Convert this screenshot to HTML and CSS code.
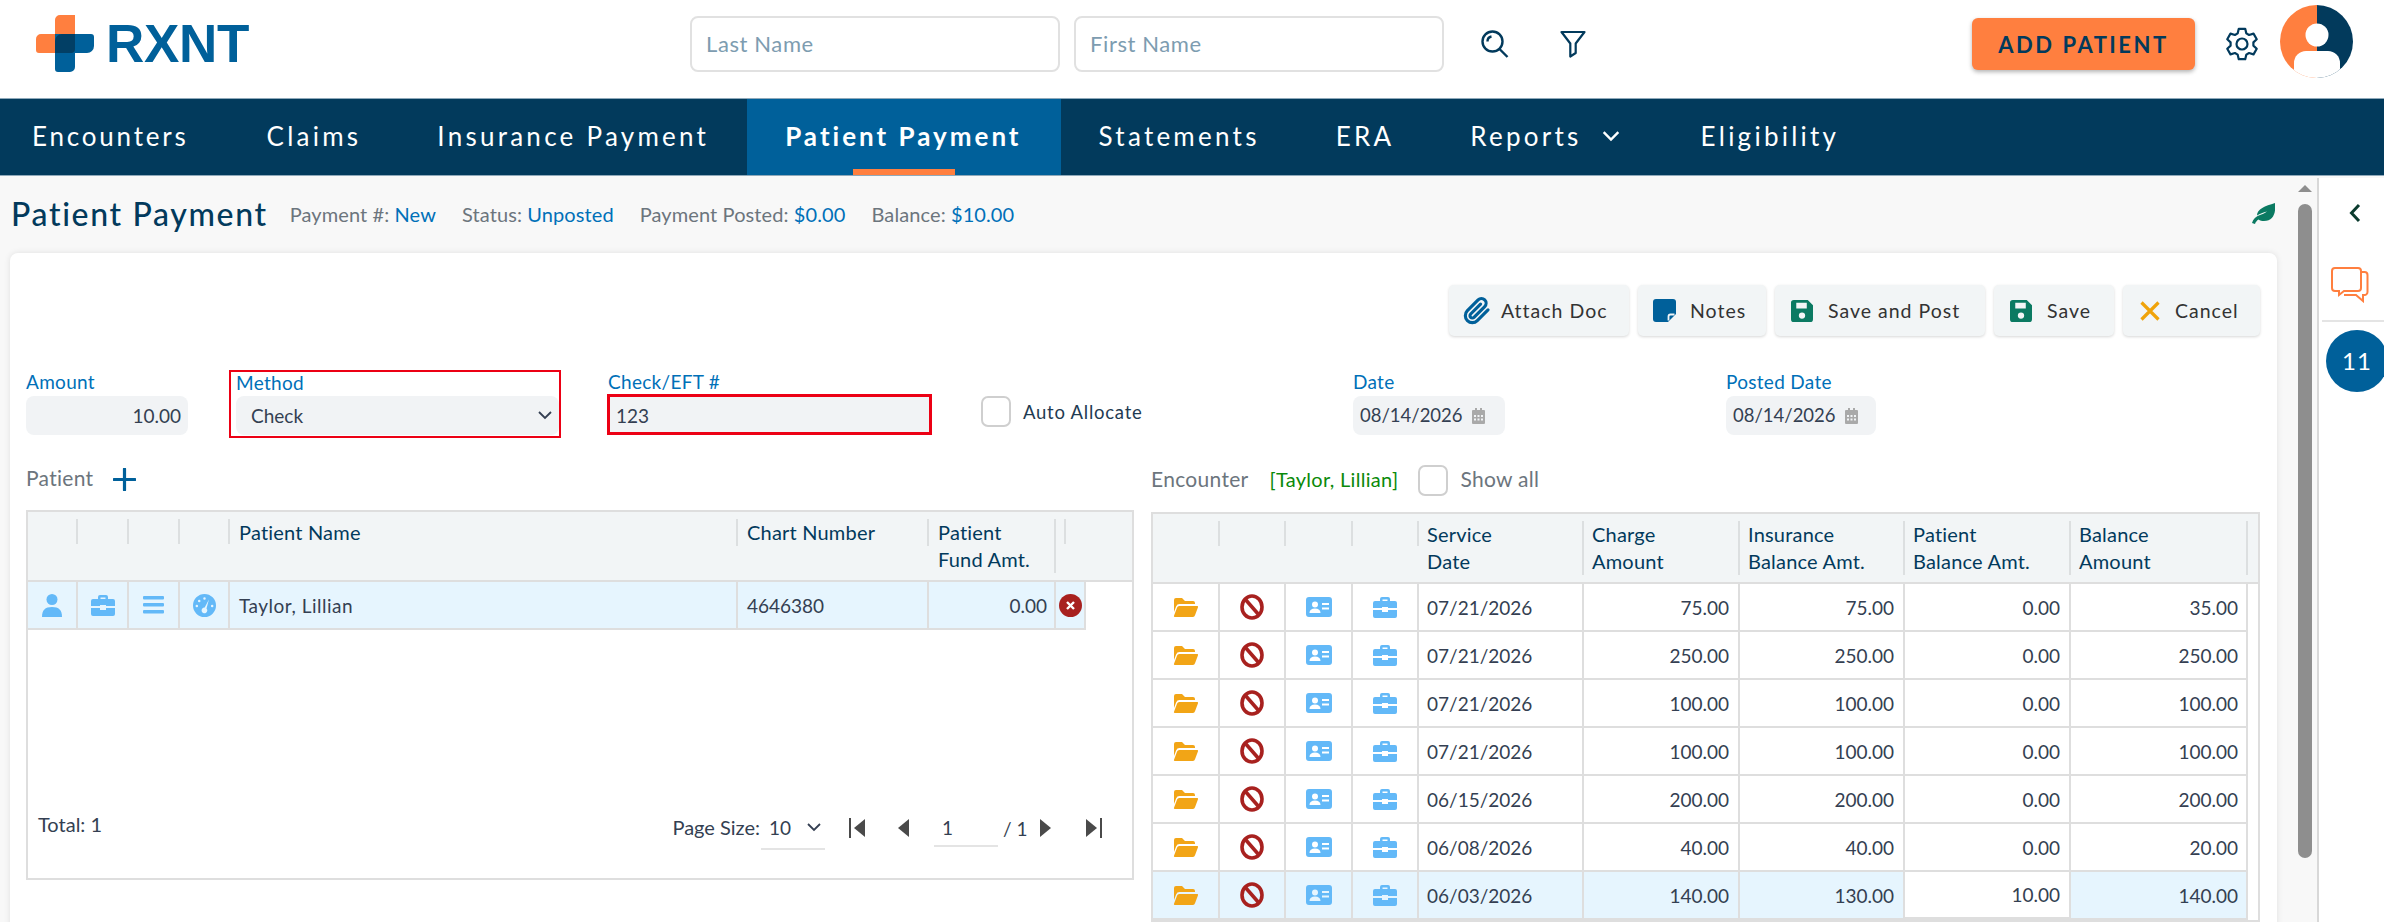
FILE: index.html
```html
<!DOCTYPE html>
<html lang="en">
<head>
<meta charset="utf-8">
<title>Patient Payment</title>
<link rel="stylesheet" href="styles.css">
</head>
<body>
<svg class="defs" aria-hidden="true">
  <symbol id="i-person" viewBox="0 0 20 23"><circle cx="10" cy="5.5" r="5.5"/><path d="M0 23c0-7 3-10 10-10s10 3 10 10z"/></symbol>
  <symbol id="i-case" viewBox="0 0 24 22"><path d="M7 5V3a2 2 0 0 1 2-2h6a2 2 0 0 1 2 2v2h-2.500V3.500h-5V5z"/><path d="M2 5h20a2 2 0 0 1 2 2v5H15v-1H9v1H0V7a2 2 0 0 1 2-2z"/><path d="M0 14h9v2h6v-2h9v6a2 2 0 0 1-2 2H2a2 2 0 0 1-2-2z"/></symbol>
  <symbol id="i-list" viewBox="0 0 21 18"><rect width="21" height="3.600" rx="1"/><rect y="7" width="21" height="3.600" rx="1"/><rect y="14" width="21" height="3.600" rx="1"/></symbol>
  <symbol id="i-gauge" viewBox="0 0 24 24"><path fill-rule="evenodd" d="M12 0a12 12 0 1 1 0 24 12 12 0 0 1 0-24zm4.600 5.800-4.400 8.300a3 3 0 1 0 1.900.9zM12 3.400a1.300 1.300 0 1 0 0 2.600 1.300 1.300 0 0 0 0-2.600zM6.500 6a1.300 1.300 0 1 0 0 2.600 1.300 1.300 0 0 0 0-2.600zM4 11.300a1.300 1.300 0 1 0 0 2.600 1.300 1.300 0 0 0 0-2.600zm16 0a1.300 1.300 0 1 0 0 2.600 1.300 1.300 0 0 0 0-2.600z"/></symbol>
  <symbol id="i-folder" viewBox="0 0 25 20"><path d="M1 3a2 2 0 0 1 2-2h6l3 3h8a2 2 0 0 1 2 2v1H6.500a3.500 3.500 0 0 0-3.300 2.300L1 15z"/><path d="M6.500 9H24a1 1 0 0 1 1 1.300l-3 8a2.500 2.500 0 0 1-2 1.700H2a1 1 0 0 1-1-1.300l3-8a2.500 2.500 0 0 1 2.500-1.700z"/></symbol>
  <symbol id="i-ban" viewBox="0 0 24 26"><ellipse cx="12" cy="13" rx="10" ry="11" fill="none" stroke="currentColor" stroke-width="3.600"/><path d="M5 5l14 16" fill="none" stroke="currentColor" stroke-width="3.600"/></symbol>
  <symbol id="i-id" viewBox="0 0 26 20"><path fill-rule="evenodd" d="M3 0h20a3 3 0 0 1 3 3v14a3 3 0 0 1-3 3H3a3 3 0 0 1-3-3V3a3 3 0 0 1 3-3zm6 4.500a3 3 0 1 0 0 6 3 3 0 0 0 0-6zM3.500 16h11c0-3-2-4.500-5.500-4.500S3.500 13 3.500 16zM16 6v2h7V6zm0 4.500v2h7v-2z"/></symbol>
  <symbol id="i-save" viewBox="0 0 23 23"><path fill-rule="evenodd" d="M3 0h14.500L23 5.500V20a3 3 0 0 1-3 3H3a3 3 0 0 1-3-3V3a3 3 0 0 1 3-3zm2.500 3v6h11V3zm6 10a3.300 3.300 0 1 0 0 6.600 3.300 3.300 0 0 0 0-6.600z"/></symbol>
  <symbol id="i-cal" viewBox="0 0 13 16"><path fill-rule="evenodd" d="M1 2h2V0h2v2h3V0h2v2h2a1 1 0 0 1 1 1v12a1 1 0 0 1-1 1H1a1 1 0 0 1-1-1V3a1 1 0 0 1 1-1zm1 5v2h2V7zm3.500 0v2h2V7zM9 7v2h2V7zm-7 3.500v2h2v-2zm3.500 0v2h2v-2zm3.500 0v2h2v-2z"/></symbol>
  <symbol id="i-chev" viewBox="0 0 14 9"><path d="M1 1l6 6 6-6" fill="none" stroke="currentColor" stroke-width="1.800"/></symbol>
</svg>

<header class="topbar">
  <div class="logo">
    <svg class="logo-mark" viewBox="0 0 58 57" aria-hidden="true">
      <path class="lm-orange" d="M24 0h15v38H3a3 3 0 0 1-3-3V24a5 5 0 0 1 5-5h14V5a5 5 0 0 1 5-5z"/>
      <path class="lm-blue" d="M19 19h36a3 3 0 0 1 3 3v9a7 7 0 0 1-7 7H39v14a5 5 0 0 1-5 5H22a3 3 0 0 1-3-3z"/>
      <path class="lm-dark" d="M26 19h13v15a4 4 0 0 1-4 4H19V26a7 7 0 0 1 7-7z"/>
    </svg>
    <span class="logo-text">RXNT</span>
  </div>
  <div class="search">
    <input class="search-input" type="text" placeholder="Last Name">
    <input class="search-input" type="text" placeholder="First Name">
    <svg class="ic-search" viewBox="0 0 28 28" aria-hidden="true"><circle cx="11.500" cy="11.500" r="10"/><path d="M18.500 19l8 8M6.500 11.500a5 5 0 0 1 4-5"/></svg>
    <svg class="ic-filter" viewBox="0 0 26 28" aria-hidden="true"><path d="M1.500 2h23l-8.800 11.500V23l-5.400 3.500v-13z"/></svg>
  </div>
  <div class="top-actions">
    <button class="add-btn" type="button">ADD PATIENT</button>
    <svg class="ic-gear" viewBox="-17 -17 34 34" aria-hidden="true"><path d="M-4.310-10.660-3.220-15.160 3.220-15.160 4.310-10.660 7.080-9.060 11.520-10.370 14.740-4.790 11.390-1.600 11.390 1.600 14.740 4.790 11.520 10.370 7.080 9.060 4.310 10.660 3.220 15.160-3.220 15.160-4.310 10.660-7.080 9.060-11.520 10.370-14.740 4.790-11.390 1.600-11.390-1.600-14.740-4.790-11.520-10.370-7.080-9.060z"/><circle r="5.500"/></svg>
    <svg class="avatar" viewBox="0 0 73 73" aria-hidden="true">
      <defs><clipPath id="av"><circle cx="36.500" cy="36.500" r="36.500"/></clipPath></defs>
      <g clip-path="url(#av)">
        <rect class="av-o" width="37" height="73"/>
        <rect class="av-n" x="37" width="36" height="73"/>
        <circle class="av-w" cx="37" cy="30" r="11.500"/>
        <rect class="av-w" x="14" y="46" width="46" height="40" rx="12"/>
      </g>
    </svg>
  </div>
</header>

<nav class="nav">
  <a class="nav-item">Encounters</a>
  <a class="nav-item">Claims</a>
  <a class="nav-item">Insurance Payment</a>
  <a class="nav-item active">Patient Payment</a>
  <a class="nav-item">Statements</a>
  <a class="nav-item">ERA</a>
  <a class="nav-item">Reports <svg class="nav-chev" viewBox="0 0 14 9" aria-hidden="true"><path d="M1 1l6 6 6-6"/></svg></a>
  <a class="nav-item">Eligibility</a>
</nav>

<div class="main">
  <main class="content">
    <div class="title-row">
      <h1 class="title">Patient Payment</h1>
      <span class="meta m1">Payment #: <b>New</b></span>
      <span class="meta m2">Status: <b>Unposted</b></span>
      <span class="meta m3">Payment Posted: <b>$0.00</b></span>
      <span class="meta m4">Balance: <b>$10.00</b></span>
      <svg class="leaf" viewBox="0 0 23 21" aria-hidden="true"><path d="M23 0c1 9-1 18-11 18-2 0-4-.5-5.500-1.500C5 17.500 3.500 19 3 21L0 20c1-4 4-6.500 8-8 3-1 5-2 7-3.500-4 1-7 2-10 4C5 6 13 3 23 0z"/></svg>
    </div>

    <section class="card">
      <div class="toolbar">
        <button class="btn b-attach" type="button">
          <svg class="ic-clip" viewBox="0 0 24 24" aria-hidden="true"><path d="M21.440 11.050l-9.190 9.190a6 6 0 0 1-8.490-8.490l9.190-9.190a4 4 0 0 1 5.660 5.660l-9.200 9.190a2 2 0 0 1-2.830-2.830l8.490-8.480"/></svg>Attach Doc</button>
        <button class="btn b-notes" type="button">
          <svg class="ic-note" viewBox="0 0 23 23" aria-hidden="true"><path d="M3 0h17a3 3 0 0 1 3 3v12l-8 8H3a3 3 0 0 1-3-3V3a3 3 0 0 1 3-3z"/><path class="fold" d="M15.500 21.500v-4a2 2 0 0 1 2-2h4"/></svg>Notes</button>
        <button class="btn b-post" type="button"><svg class="ic-save"><use href="#i-save"/></svg>Save and Post</button>
        <button class="btn b-save" type="button"><svg class="ic-save"><use href="#i-save"/></svg>Save</button>
        <button class="btn b-cancel" type="button"><svg class="ic-x" viewBox="0 0 20 20" aria-hidden="true"><path d="M1.500 1.500l17 17M18.500 1.500l-17 17"/></svg>Cancel</button>
      </div>

      <div class="form-row">
        <div class="field f-amount">
          <label class="flabel">Amount</label>
          <div class="fbox right">10.00</div>
        </div>
        <div class="field f-method">
          <label class="flabel tight">Method</label>
          <div class="fbox select">Check<svg class="sel-chev"><use href="#i-chev"/></svg></div>
        </div>
        <div class="field f-check">
          <label class="flabel tight">Check/EFT #</label>
          <div class="fbox error">123</div>
        </div>
        <div class="field f-auto">
          <span class="checkbox"></span><span class="auto-label">Auto Allocate</span>
        </div>
        <div class="field f-date">
          <label class="flabel">Date</label>
          <div class="fbox date">08/14/2026<svg class="ic-cal"><use href="#i-cal"/></svg></div>
        </div>
        <div class="field f-posted">
          <label class="flabel">Posted Date</label>
          <div class="fbox date">08/14/2026<svg class="ic-cal"><use href="#i-cal"/></svg></div>
        </div>
      </div>

      <div class="split">
        <div class="col">
          <div class="sec-head left-head">
            <span class="sec-label">Patient</span>
            <svg class="ic-plus" viewBox="0 0 23 23" aria-hidden="true"><path d="M11.500 1v21M1 11.500h21"/></svg>
          </div>
          <div class="panel patient-panel">
            <table class="grid patient-grid">
              <colgroup><col class="p1"><col class="p2"><col class="p3"><col class="p4"><col class="p5"><col class="p6"><col class="p7"><col class="p8"><col class="p9"></colgroup>
              <thead>
                <tr>
                  <th><div class="hc"></div></th><th><div class="hc"></div></th><th><div class="hc"></div></th><th><div class="hc"></div></th>
                  <th><div class="hc">Patient Name</div></th>
                  <th><div class="hc">Chart Number</div></th>
                  <th><div class="hc">Patient<br>Fund Amt.</div></th>
                  <th><div class="hc w10"></div></th>
                  <th class="blank"></th>
                </tr>
              </thead>
              <tbody>
                <tr class="sel">
                  <td class="ic"><svg class="ri i20"><use href="#i-person"/></svg></td>
                  <td class="ic"><svg class="ri i24"><use href="#i-case"/></svg></td>
                  <td class="ic"><svg class="ri i21"><use href="#i-list"/></svg></td>
                  <td class="ic"><svg class="ri i23"><use href="#i-gauge"/></svg></td>
                  <td class="name">Taylor, Lillian</td>
                  <td>4646380</td>
                  <td class="num fund">0.00</td>
                  <td class="ic"><svg class="remove" viewBox="0 0 23 23" aria-hidden="true"><circle cx="11.500" cy="11.500" r="11.500"/><path d="M8 8l7 7M15 8l-7 7"/></svg></td>
                  <td class="blank"></td>
                </tr>
              </tbody>
            </table>
            <div class="pager">
              <span class="total">Total: 1</span>
              <span class="ps-label">Page Size:</span>
              <span class="ps-box">10<svg class="ps-chev"><use href="#i-chev"/></svg></span>
              <svg class="pg pg-first" viewBox="0 0 18 20" aria-hidden="true"><rect width="2" height="20"/><path d="M16 1v18L5 10z"/></svg>
              <svg class="pg pg-prev" viewBox="0 0 15 20" aria-hidden="true"><path d="M13 1v18L2 10z"/></svg>
              <span class="pg-box">1</span>
              <span class="pg-of">/ 1</span>
              <svg class="pg pg-next" viewBox="0 0 15 20" aria-hidden="true"><path d="M2 1v18l11-9z"/></svg>
              <svg class="pg pg-last" viewBox="0 0 18 20" aria-hidden="true"><rect x="16" width="2" height="20"/><path d="M2 1v18l11-9z"/></svg>
            </div>
          </div>
        </div>

        <div class="col">
          <div class="sec-head right-head">
            <span class="sec-label">Encounter</span>
            <span class="enc-name">[Taylor, Lillian]</span>
            <span class="checkbox enc-check"></span>
            <span class="sec-label">Show all</span>
          </div>
          <div class="panel">
            <table class="grid enc-grid">
              <colgroup><col class="e1"><col class="e2"><col class="e3"><col class="e4"><col class="e5"><col class="e6"><col class="e7"><col class="e8"><col class="e9"><col class="e10"></colgroup>
              <thead>
                <tr>
                  <th><div class="hc"></div></th><th><div class="hc"></div></th><th><div class="hc"></div></th><th><div class="hc"></div></th>
                  <th><div class="hc">Service<br>Date</div></th>
                  <th><div class="hc">Charge<br>Amount</div></th>
                  <th><div class="hc">Insurance<br>Balance Amt.</div></th>
                  <th><div class="hc">Patient<br>Balance Amt.</div></th>
                  <th><div class="hc">Balance<br>Amount</div></th>
                  <th class="blank"></th>
                </tr>
              </thead>
              <tbody>
                <tr><td class="ic"><svg class="ri folder"><use href="#i-folder"/></svg></td><td class="ic"><svg class="ri ban"><use href="#i-ban"/></svg></td><td class="ic"><svg class="ri idc"><use href="#i-id"/></svg></td><td class="ic"><svg class="ri i24"><use href="#i-case"/></svg></td><td>07/21/2026</td><td class="num">75.00</td><td class="num">75.00</td><td class="num">0.00</td><td class="num bal">35.00</td><td class="blank"></td></tr>
                <tr><td class="ic"><svg class="ri folder"><use href="#i-folder"/></svg></td><td class="ic"><svg class="ri ban"><use href="#i-ban"/></svg></td><td class="ic"><svg class="ri idc"><use href="#i-id"/></svg></td><td class="ic"><svg class="ri i24"><use href="#i-case"/></svg></td><td>07/21/2026</td><td class="num">250.00</td><td class="num">250.00</td><td class="num">0.00</td><td class="num bal">250.00</td><td class="blank"></td></tr>
                <tr><td class="ic"><svg class="ri folder"><use href="#i-folder"/></svg></td><td class="ic"><svg class="ri ban"><use href="#i-ban"/></svg></td><td class="ic"><svg class="ri idc"><use href="#i-id"/></svg></td><td class="ic"><svg class="ri i24"><use href="#i-case"/></svg></td><td>07/21/2026</td><td class="num">100.00</td><td class="num">100.00</td><td class="num">0.00</td><td class="num bal">100.00</td><td class="blank"></td></tr>
                <tr><td class="ic"><svg class="ri folder"><use href="#i-folder"/></svg></td><td class="ic"><svg class="ri ban"><use href="#i-ban"/></svg></td><td class="ic"><svg class="ri idc"><use href="#i-id"/></svg></td><td class="ic"><svg class="ri i24"><use href="#i-case"/></svg></td><td>07/21/2026</td><td class="num">100.00</td><td class="num">100.00</td><td class="num">0.00</td><td class="num bal">100.00</td><td class="blank"></td></tr>
                <tr><td class="ic"><svg class="ri folder"><use href="#i-folder"/></svg></td><td class="ic"><svg class="ri ban"><use href="#i-ban"/></svg></td><td class="ic"><svg class="ri idc"><use href="#i-id"/></svg></td><td class="ic"><svg class="ri i24"><use href="#i-case"/></svg></td><td>06/15/2026</td><td class="num">200.00</td><td class="num">200.00</td><td class="num">0.00</td><td class="num bal">200.00</td><td class="blank"></td></tr>
                <tr><td class="ic"><svg class="ri folder"><use href="#i-folder"/></svg></td><td class="ic"><svg class="ri ban"><use href="#i-ban"/></svg></td><td class="ic"><svg class="ri idc"><use href="#i-id"/></svg></td><td class="ic"><svg class="ri i24"><use href="#i-case"/></svg></td><td>06/08/2026</td><td class="num">40.00</td><td class="num">40.00</td><td class="num">0.00</td><td class="num bal">20.00</td><td class="blank"></td></tr>
                <tr class="sel"><td class="ic"><svg class="ri folder"><use href="#i-folder"/></svg></td><td class="ic"><svg class="ri ban"><use href="#i-ban"/></svg></td><td class="ic"><svg class="ri idc"><use href="#i-id"/></svg></td><td class="ic"><svg class="ri i24"><use href="#i-case"/></svg></td><td>06/03/2026</td><td class="num">140.00</td><td class="num">130.00</td><td class="num editing">10.00</td><td class="num bal">140.00</td><td class="blank"></td></tr>
              </tbody>
            </table>
          </div>
        </div>
      </div>
    </section>
  </main>

  <div class="scrollbar"><span class="sb-up"></span><span class="sb-thumb"></span></div>

  <aside class="side">
    <svg class="ic-back" viewBox="0 0 12 20" aria-hidden="true"><path d="M10 2L2.500 10l7.500 8"/></svg>
    <svg class="ic-chat" viewBox="0 0 38 36" aria-hidden="true"><path d="M4 1h23a3 3 0 0 1 3 3v17a3 3 0 0 1-3 3H13l-5 4v-4H4a3 3 0 0 1-3-3V4a3 3 0 0 1 3-3z"/><path d="M30 5h3.500a3 3 0 0 1 3 3v17a3 3 0 0 1-3 3H32v6l-7-6H13"/></svg>
    <div class="side-rule"></div>
    <div class="count">11</div>
  </aside>
</div>
</body>
</html>
```
FILE: styles.css
```css
* { box-sizing: border-box; }
html, body { margin: 0; padding: 0; height: 922px; overflow: hidden; }
body { font-family: Lato, "Noto Sans", sans-serif; font-size: 19px; color: #343f52; background: #fff; }
.defs { width: 0; height: 0; display: block; }
svg { display: block; flex: none; }

/* top bar */
.topbar { height: 98px; display: flex; align-items: flex-start; background: #fff; }
.logo { width: 690px; padding: 15px 0 0 36px; display: flex; align-items: flex-start; flex: none; }
.logo-mark { width: 58px; height: 57px; }
.lm-orange { fill: #ff7f3f; }
.lm-blue { fill: #00609a; }
.lm-dark { fill: #023a5c; opacity: .85; }
.logo-text { font-family: "Liberation Sans", sans-serif; font-weight: 700; font-size: 53px; line-height: 57px; color: #00609a; margin-left: 12px; letter-spacing: -.3px; }
.search { display: flex; align-items: flex-start; padding-top: 16px; flex: none; }
.search-input { width: 370px; height: 56px; border: 2px solid #e1e1e1; border-radius: 8px; padding: 0 14px 2px; font: 22px Lato, sans-serif; letter-spacing: .6px; color: #333; background: #fff; outline: none; }
.search-input + .search-input { margin-left: 14px; }
.search-input::placeholder { color: #7d9cb0; opacity: 1; }
.ic-search { width: 28px; height: 28px; margin: 14px 0 0 37px; fill: none; stroke: #023a5c; stroke-width: 2.400; }
.ic-filter { width: 26px; height: 28px; margin: 14px 0 0 51px; fill: none; stroke: #023a5c; stroke-width: 2.200; stroke-linejoin: round; }
.top-actions { display: flex; align-items: flex-start; margin-left: 386px; flex: none; }
.add-btn { width: 223px; height: 52px; margin-top: 18px; border: 0; border-radius: 6px; background: #ff7f3f; color: #023a5c; font: 700 22px Lato, sans-serif; letter-spacing: 2.500px; box-shadow: 0 2px 4px rgba(0,0,0,.3); }
.ic-gear { width: 34px; height: 34px; margin: 27px 0 0 30px; fill: none; stroke: #023a5c; stroke-width: 2.200; stroke-linejoin: round; }
.avatar { width: 73px; height: 73px; margin: 5px 0 0 21px; }
.av-o { fill: #ff7f3f; }
.av-n { fill: #023a5c; }
.av-w { fill: #fff; }

/* navigation */
.nav { height: 78px; display: flex; background: #023a5c; border-top: 1px solid #8fa9ba; border-bottom: 1px solid #8fa9ba; }
.nav-item { display: flex; align-items: center; padding: 0 38px 2px 38px; color: #fff; font-size: 26px; letter-spacing: 3.250px; white-space: nowrap; }
.nav-item:first-child { padding: 0 40px 2px 32px; letter-spacing: 2.800px; }
.nav-item.active { background: #00609a; font-weight: 700; letter-spacing: 3px; padding-right: 39px; position: relative; }
.nav-item.active::after { content: ""; position: absolute; left: 106px; width: 102px; bottom: 0; height: 6px; background: #ff7f3f; }
.nav-chev { width: 18px; height: 11px; margin: 0 5px 0 20px; fill: none; stroke: #fff; stroke-width: 2; }

/* main area */
.main { display: flex; height: 746px; background: #f8f8f8; }
.content { width: 2293px; flex: none; padding: 0 16px 0 10px; overflow: hidden; }
.title-row { height: 77px; display: flex; align-items: center; }
.title { margin: -2px 0 0 1px; font-size: 32px; font-weight: 500; color: #023a5c; letter-spacing: 1.650px; white-space: nowrap; }
.meta { font-size: 20px; color: #6c757d; white-space: nowrap; letter-spacing: .1px; margin-top: -1px; }
.meta b { font-weight: 400; color: #0070b8; }
.m1 { margin-left: 22px; }
.m2 { margin-left: 26px; }
.m3 { margin-left: 26px; }
.m4 { margin-left: 26px; }
.leaf { width: 23px; height: 21px; margin: -3px 2px 0 auto; fill: #0b7a62; }

.card { background: #fff; border-radius: 8px 8px 0 0; padding: 32px 17px 0 16px; box-shadow: 0 0 6px rgba(0,0,0,.1); height: 700px; }

.toolbar { display: flex; justify-content: flex-end; gap: 9px; }
.btn { height: 51px; display: flex; align-items: center; border: 0; border-radius: 5px; background: #f2f5f6; color: #333; font: 19.500px Lato, sans-serif; letter-spacing: 1px; box-shadow: 0 1px 3px rgba(0,0,0,.16); padding: 0; white-space: nowrap; }
.b-attach { width: 180px; padding-left: 14px; }
.b-notes { width: 128px; padding-left: 15px; }
.b-post { width: 210px; padding-left: 16px; }
.b-save { width: 120px; padding-left: 16px; }
.b-cancel { width: 137px; padding-left: 17px; }
.ic-clip { width: 28px; height: 28px; margin-right: 10px; fill: none; stroke: #00609a; stroke-width: 2.700; stroke-linecap: round; }
.ic-note { width: 23px; height: 23px; margin-right: 14px; fill: #00609a; }
.ic-note .fold { fill: none; stroke: #f2f5f6; stroke-width: 1.800; }
.ic-save { width: 22px; height: 22px; margin-right: 15px; fill: #0b7a62; }
.ic-x { width: 20px; height: 20px; margin-right: 15px; fill: none; stroke: #f0a30a; stroke-width: 3.200; }

/* form */
.form-row { display: flex; align-items: flex-start; margin-top: 34px; height: 68px; }
.field { flex: none; }
.flabel { display: block; height: 26px; line-height: 24px; font-size: 19px; color: #0070b8; letter-spacing: .3px; white-space: nowrap; }
.flabel.tight { height: 24px; line-height: 24px; }
.f-method .flabel.tight { line-height: 21px; }
.fbox { height: 39px; line-height: 39px; background: #f1f3f5; border-radius: 8px; font-size: 19px; color: #343f52; }
.fbox.right { text-align: right; padding-right: 7px; }
.f-amount { width: 162px; }
.f-method { width: 332px; height: 68px; margin-left: 41px; border: 2px solid #ec0014; padding-left: 5px; }
.fbox.select { width: 323px; padding-left: 15px; display: flex; align-items: center; justify-content: space-between; padding-right: 7px; }
.sel-chev { width: 14px; height: 9px; color: #343f52; }
.f-check { width: 325px; margin-left: 46px; }
.f-check .flabel { padding-left: 1px; }
.fbox.error { height: 41px; line-height: 37px; border: 3px solid #ec0014; border-radius: 0; padding-left: 6px; }
.f-auto { display: flex; align-items: center; margin: 26px 0 0 49px; width: 372px; }
.checkbox { display: block; flex: none; width: 30px; height: 31px; border: 2px solid #cfcfcf; border-radius: 7px; background: #fff; }
.auto-label { margin-left: 12px; font-size: 18.500px; letter-spacing: .75px; color: #1f3b52; white-space: nowrap; }
.f-date { width: 152px; }
.f-posted { width: 150px; margin-left: 221px; }
.fbox.date { display: flex; align-items: center; padding-left: 7px; font-size: 18.500px; }
.ic-cal { width: 13px; height: 16px; margin-left: 9px; fill: #a9a9a9; }

/* two columns */
.split { display: grid; grid-template-columns: 1108px 1109px; column-gap: 17px; }
.sec-head { height: 32px; display: flex; align-items: center; margin-bottom: 15px; }
.left-head { margin-top: 25px; }
.right-head { margin-top: 26px; margin-bottom: 16px; }
.sec-label { font-size: 21px; color: #6c757d; letter-spacing: .3px; white-space: nowrap; padding-bottom: 3px; }
.ic-plus { width: 23px; height: 23px; margin-left: 20px; fill: none; stroke: #00609a; stroke-width: 3.200; stroke-linecap: round; }
.enc-name { margin-left: 21px; font-size: 20px; letter-spacing: .3px; color: #0a8a0a; white-space: nowrap; padding-bottom: 3px; }
.enc-check { margin: 0 12px 0 20px; }

.panel { border: 2px solid #dedede; background: #fff; }
.patient-panel { height: 370px; display: flex; flex-direction: column; }

.grid { width: 100%; table-layout: fixed; border-collapse: separate; border-spacing: 0; }
.grid th { background: #f2f5f6; padding: 7px 0; vertical-align: top; text-align: left; font-weight: 400; font-size: 20px; line-height: 27px; color: #023a5c; border-bottom: 2px solid #dedede; }
.hc { min-height: 25px; padding: 0 9px; border-right: 2px solid #dcdfe0; white-space: nowrap; letter-spacing: .2px; }
.w10 { width: 10px; padding: 0; }
.grid td { height: 48px; padding: 0 9px; font-size: 19px; color: #343f52; border-right: 2px solid #dedede; border-bottom: 2px solid #dedede; white-space: nowrap; background: #fff; }
.grid td.name { letter-spacing: .5px; }
.grid td.blank { background: #fff; border: 0; }
.grid td.num { text-align: right; }
.grid td.fund { padding-right: 7px; }
.grid td.ic { padding: 0; }
.enc-grid .hc { padding-left: 8px; }
.enc-grid td { padding-left: 8px; }
.grid td.bal { padding-right: 8px; }
.grid tr.sel td { background: #e6f5fe; }
.grid tr.sel td.blank { background: #fff; }
.grid tr.sel td.editing { background: #fff; border-bottom-width: 3px; }
.ri { margin: 0 auto; fill: #63b9f8; color: #63b9f8; }
.i20 { width: 20px; height: 23px; }
.i24 { width: 24px; height: 22px; }
.i21 { width: 21px; height: 18px; }
.i23 { width: 23px; height: 23px; }
.folder { width: 25px; height: 20px; fill: #f2a516; }
.ban { width: 24px; height: 26px; color: #a8211f; fill: none; }
.idc { width: 26px; height: 20px; }
.remove { width: 23px; height: 23px; margin: 0 auto; fill: #a8211f; stroke: #fff; stroke-width: 2.400; }
.remove circle { stroke: none; }

.p1 { width: 50px; } .p2 { width: 51px; } .p3 { width: 51px; } .p4 { width: 50px; }
.p5 { width: 508px; } .p6 { width: 191px; } .p7 { width: 127px; } .p8 { width: 30px; } .p9 { width: 46px; }
.e1 { width: 67px; } .e2 { width: 66px; } .e3 { width: 67px; } .e4 { width: 66px; }
.e5 { width: 165px; } .e6 { width: 156px; } .e7 { width: 165px; } .e8 { width: 166px; } .e9 { width: 177px; } .e10 { width: 10px; }

/* pager */
.pager { margin-top: auto; margin-bottom: 28px; height: 44px; display: flex; align-items: center; padding-left: 10px; font-size: 19px; color: #343f52; }
.total { margin-bottom: 8px; white-space: nowrap; font-size: 20px; }
.ps-label { margin: 0 0 2px auto; white-space: nowrap; font-size: 20px; }
.ps-box { width: 64px; height: 40px; margin: 4px 0 0 1px; padding: 0 0 4px 8px; border-bottom: 2px solid #e4e4e4; display: flex; align-items: center; }
.ps-chev { width: 14px; height: 9px; margin-left: 16px; color: #343f52; }
.pg { fill: #4a4a4a; height: 20px; }
.pg-first { width: 18px; margin-left: 24px; }
.pg-prev { width: 15px; margin-left: 29px; }
.pg-box { width: 64px; height: 38px; margin-left: 23px; padding-left: 8px; border-bottom: 2px solid #e4e4e4; display: flex; align-items: center; }
.pg-of { margin-left: 5px; white-space: nowrap; width: 35px; }
.pg-next { width: 15px; }
.pg-last { width: 18px; margin: 0 30px 0 31px; }

/* scrollbar + side rail */
.scrollbar { width: 24px; flex: none; padding: 9px 0 0 5px; background: #f8f8f8; }
.sb-up { display: block; width: 0; height: 0; border-left: 7px solid transparent; border-right: 7px solid transparent; border-bottom: 7px solid #8e8e8e; }
.sb-thumb { display: block; width: 14px; height: 654px; margin-top: 12px; background: #8e8e8e; border-radius: 7px; }
.side { flex: 1; background: #fff; border-left: 2px solid #d8d8d8; margin-top: 2px; padding-top: 25px; overflow: hidden; }
.ic-back { width: 12px; height: 20px; margin-left: 30px; fill: none; stroke: #0b3b2e; stroke-width: 3; }
.ic-chat { width: 38px; height: 36px; margin: 44px 0 0 12px; fill: none; stroke: #ff7f3f; stroke-width: 2; }
.side-rule { height: 2px; background: #e4e4e4; margin: 17px 0 0 3px; }
.count { width: 62px; height: 62px; margin: 8px 0 0 7px; border-radius: 50%; background: #00609a; color: #fff; font-size: 24px; line-height: 62px; text-align: center; letter-spacing: 1px; }
```
